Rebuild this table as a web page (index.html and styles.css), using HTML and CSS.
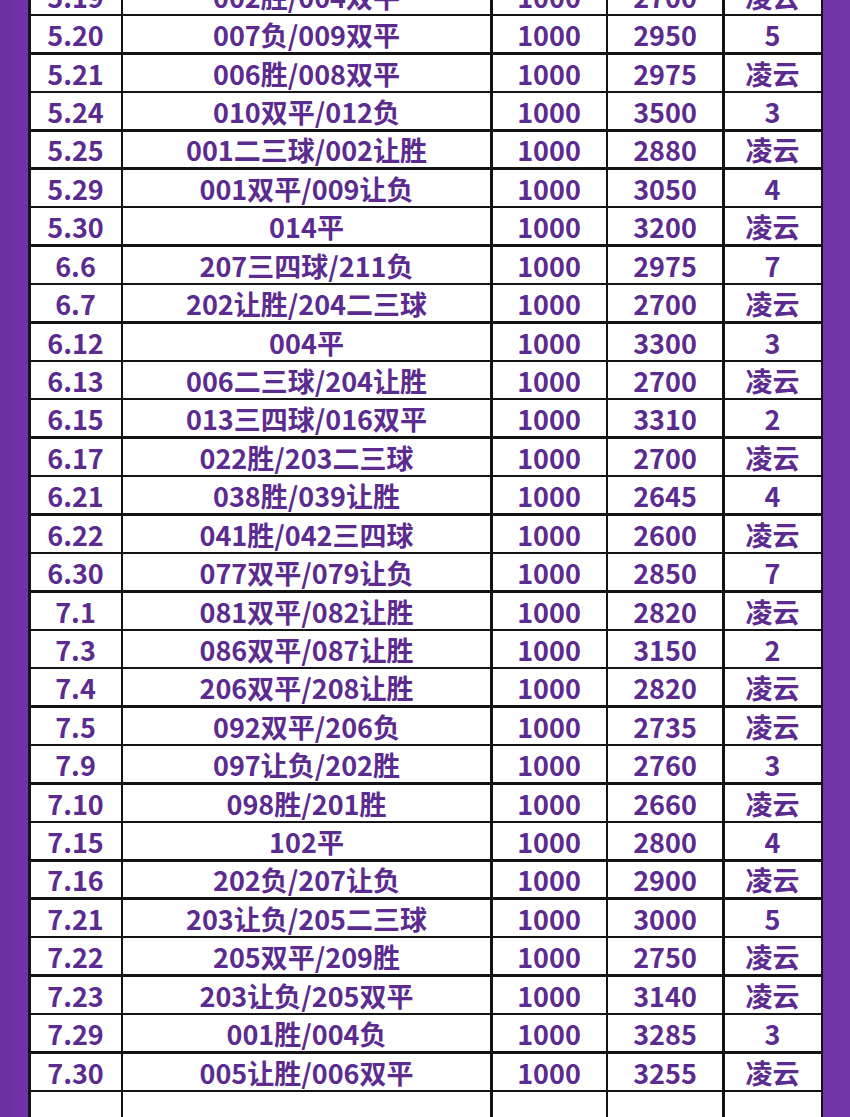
FILE: index.html
```html
<!DOCTYPE html>
<html lang="zh">
<head>
<meta charset="utf-8">
<link rel="stylesheet" href="styles.css">
</head>
<body>
<div class="page">
  <div class="table" id="t"></div>
</div>
<script>
const rows = [
["5.19","002胜/004双平","1000","2700","凌云"],
["5.20","007负/009双平","1000","2950","5"],
["5.21","006胜/008双平","1000","2975","凌云"],
["5.24","010双平/012负","1000","3500","3"],
["5.25","001二三球/002让胜","1000","2880","凌云"],
["5.29","001双平/009让负","1000","3050","4"],
["5.30","014平","1000","3200","凌云"],
["6.6","207三四球/211负","1000","2975","7"],
["6.7","202让胜/204二三球","1000","2700","凌云"],
["6.12","004平","1000","3300","3"],
["6.13","006二三球/204让胜","1000","2700","凌云"],
["6.15","013三四球/016双平","1000","3310","2"],
["6.17","022胜/203二三球","1000","2700","凌云"],
["6.21","038胜/039让胜","1000","2645","4"],
["6.22","041胜/042三四球","1000","2600","凌云"],
["6.30","077双平/079让负","1000","2850","7"],
["7.1","081双平/082让胜","1000","2820","凌云"],
["7.3","086双平/087让胜","1000","3150","2"],
["7.4","206双平/208让胜","1000","2820","凌云"],
["7.5","092双平/206负","1000","2735","凌云"],
["7.9","097让负/202胜","1000","2760","3"],
["7.10","098胜/201胜","1000","2660","凌云"],
["7.15","102平","1000","2800","4"],
["7.16","202负/207让负","1000","2900","凌云"],
["7.21","203让负/205二三球","1000","3000","5"],
["7.22","205双平/209胜","1000","2750","凌云"],
["7.23","203让负/205双平","1000","3140","凌云"],
["7.29","001胜/004负","1000","3285","3"],
["7.30","005让胜/006双平","1000","3255","凌云"],
["","","","",""],
["","","","",""]
];
const t = document.getElementById('t');
for (const r of rows) for (const c of r) {
  const d = document.createElement('div');
  d.className = 'cell';
  d.textContent = c;
  t.appendChild(d);
}
</script>
</body>
</html>
```
FILE: styles.css
```css
html, body {
  margin: 0;
  padding: 0;
  height: 1117px;
  overflow: hidden;
  background: #6c30a5;
}
.page {
  height: 1117px;
  overflow: hidden;
  padding-left: 28px;
  background: linear-gradient(90deg, #6a2ea3 0px, #7034a8 28px, #7034a8 822px, #7436aa 850px);
}
.table {
  width: 795px;
  box-sizing: border-box;
  margin-top: -24.68px;
  display: grid;
  grid-template-columns: 90px 367px 113px 114px 96px;
  grid-auto-rows: 35.93px;
  gap: 2.5px;
  padding: 2.5px;
  background: #141414;
}
.cell {
  background: #fff;
  display: flex;
  align-items: center;
  justify-content: center;
  font-family: "Noto Sans CJK SC", "Noto Sans", sans-serif;
  font-weight: 700;
  font-size: 27px;
  color: #5c2b8f;
  white-space: nowrap;
  line-height: 1;
  padding-top: 1px;
}
```
